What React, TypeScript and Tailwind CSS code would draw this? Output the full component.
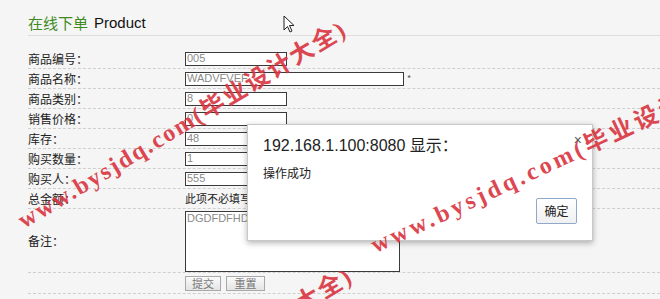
import React from "react";

const cjk = '"Noto Sans CJK SC", "Noto Sans", sans-serif';
const arial = '"Liberation Sans", "Noto Sans CJK SC", sans-serif';

const fields = [
  { label: "商品编号：", value: "005", wide: false },
  { label: "商品名称：", value: "WADVFVEF", wide: true },
  { label: "商品类别：", value: "8", wide: false },
  { label: "销售价格：", value: "0", wide: false },
  { label: "库存：", value: "48", wide: false },
  { label: "购买数量：", value: "1", wide: false },
  { label: "购买人：", value: "555", wide: false },
];

const Watermark = ({ left, top, angle, spacing }: { left: number; top: number; angle: number; spacing: number }) => (
  <div
    className="pointer-events-none absolute origin-left whitespace-nowrap text-[24px] font-bold leading-none text-[#d9343f] opacity-90"
    style={{
      left,
      top,
      letterSpacing: spacing,
      transform: `rotate(${angle}deg)`,
      fontFamily: '"Liberation Serif", "Noto Sans CJK SC", serif',
    }}
  >
    www.bysjdq.com(毕业设计大全)
  </div>
);

const Row = ({ label, children }: { label: string; children: React.ReactNode }) => (
  <div className="flex h-[20px] items-center border-b border-dashed border-[#cfcfcf]">
    <div className="w-[157px] shrink-0 text-[12px] text-[#222]">{label}</div>
    {children}
  </div>
);

export default function App() {
  return (
    <div
      className="relative h-[299px] w-[660px] overflow-hidden bg-[#f5f5f5]"
      style={{ fontFamily: cjk }}
    >
      <div className="pl-[28px]">
        <div className="flex h-[36px] items-center border-b border-[#dedede] pt-[11px] text-[15px]">
          <span className="text-[#3d8a1e]">在线下单</span>
          <span className="ml-[6px] text-[#111]" style={{ fontFamily: arial }}>
            Product
          </span>
        </div>
        <div className="pt-[13px]">
          {fields.map((f) => (
            <Row key={f.label} label={f.label}>
              <div
                className={`flex h-[14px] items-center border border-[#3a3a3a] bg-white pl-[1px] text-[11px] leading-none text-[#8a8a8a] ${
                  f.wide ? "w-[219px]" : "w-[102px]"
                }`}
                style={{ fontFamily: arial }}
              >
                {f.value}
              </div>
              {f.wide && <span className="ml-[3px] text-[9px] text-[#555]">*</span>}
            </Row>
          ))}
          <Row label="总金额：">
            <span className="text-[11px] text-[#222]">此项不必填写，</span>
          </Row>
          <div className="flex h-[64px] items-center border-b border-dashed border-[#cfcfcf]">
            <div className="w-[157px] shrink-0 text-[12px] text-[#222]">备注：</div>
            <div
              className="mt-[1px] h-[61px] w-[215px] border border-[#3a3a3a] bg-white pl-[1px] text-[11px] leading-[13px] text-[#8a8a8a]"
              style={{ fontFamily: arial }}
            >
              DGDFDFHDFHDFH
            </div>
          </div>
          <div className="flex h-[21px] items-center border-b border-dashed border-[#cfcfcf]">
            <div className="w-[157px] shrink-0" />
            <div className="flex gap-[5px]">
              <div className="flex h-[15px] w-[36px] items-center justify-center border border-[#a9a9a9] bg-gradient-to-b from-[#fafafa] to-[#e4e4e4] text-[11px] text-[#777]">
                提交
              </div>
              <div className="flex h-[15px] w-[39px] items-center justify-center border border-[#a9a9a9] bg-gradient-to-b from-[#fafafa] to-[#e4e4e4] text-[11px] text-[#777]">
                重置
              </div>
            </div>
          </div>
        </div>
      </div>

      {/* cursor */}
      <svg className="absolute left-[283px] top-[15px]" width="12" height="19" viewBox="0 0 12 19">
        <path d="M1 1 L1 15 L4.5 11.5 L7 17 L9 16 L6.5 10.5 L11 10.5 Z" fill="white" stroke="#222" strokeWidth="1" />
      </svg>

      {/* alert dialog */}
      <div className="absolute left-[247px] top-[124px] h-[117px] w-[346px] border border-[#c8c8c8] bg-white shadow-[0_2px_6px_rgba(0,0,0,0.3)]">
        <div className="absolute right-[10px] top-[5px] text-[14px] text-[#555]" style={{ fontFamily: arial }}>
          ×
        </div>
        <div className="pl-[15px] pt-[9px] text-[16px] text-[#222]" style={{ fontFamily: arial }}>
          192.168.1.100:8080 显示：
        </div>
        <div className="pl-[15px] pt-[6px] text-[12px] text-[#222]">操作成功</div>
        <div className="absolute left-[288px] top-[73px] flex h-[26px] w-[41px] items-center justify-center rounded-[2px] border border-[#8fa9cc] bg-gradient-to-b from-white to-[#f0f0f0] text-[12px] text-[#222]">
          确定
        </div>
      </div>

      <Watermark left={20} top={210} angle={-31} spacing={2} />
      <Watermark left={372} top={234} angle={-25} spacing={3.5} />
      <Watermark left={26} top={457} angle={-31} spacing={2} />
    </div>
  );
}
